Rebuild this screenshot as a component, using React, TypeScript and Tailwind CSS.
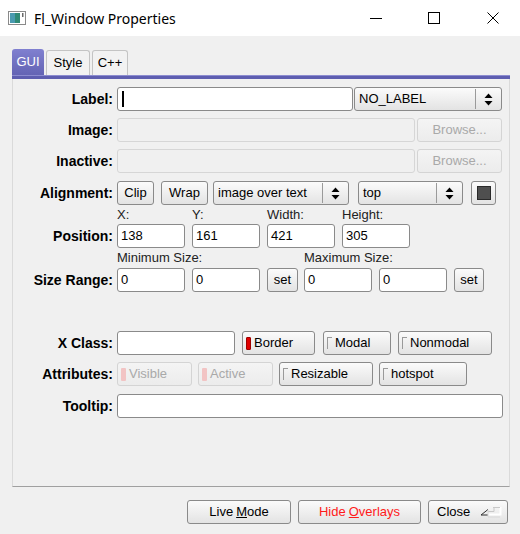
import clsx from 'clsx';
import React from 'react';
import { twMerge } from 'tailwind-merge';

const FONT = "font-['Liberation_Sans',Arial,sans-serif]";

const Btn = ({ className, children, disabled }: { className?: string; children?: React.ReactNode; disabled?: boolean }) => (
  <div
    className={twMerge(
      clsx(
        'flex h-[24px] shrink-0 items-center justify-center rounded-[3px] border bg-linear-to-b text-[13px]',
        disabled
          ? 'border-[#d4d4d4] from-[#f4f4f4] to-[#ececec] text-[#a9a9a9]'
          : 'border-[#8a8a8a] from-[#fbfbfb] to-[#e3e3e3] text-black',
      ),
      className,
    )}>
    {children}
  </div>
);

const Input = ({ className, value, disabled, caret }: { className?: string; value?: string; disabled?: boolean; caret?: boolean }) => (
  <div
    className={clsx(
      'flex h-[24px] shrink-0 items-center rounded-[3px] border px-[3px] text-[13px]',
      disabled ? 'border-[#d6d6d6] bg-[#f0f0f0]' : 'border-[#8a8a8a] bg-white',
      className,
    )}>
    {caret && <div className="ml-[1px] h-[16px] w-[2px] bg-black" />}
    {value}
  </div>
);

const Arrows = () => (
  <svg width="9" height="13" viewBox="0 0 9 13">
    <path d="M4.5 0.5 L8.5 5 L0.5 5 Z" fill="#000" />
    <path d="M0.5 8 L8.5 8 L4.5 12.5 Z" fill="#000" />
  </svg>
);

const Choice = ({ className, label }: { className?: string; label: string }) => (
  <div
    className={clsx(
      'flex h-[24px] shrink-0 items-stretch rounded-[3px] border border-[#8a8a8a] bg-linear-to-b from-[#fbfbfb] to-[#e3e3e3] text-[13px]',
      className,
    )}>
    <div className="flex flex-1 items-center pl-[4px]">{label}</div>
    <div className="my-[1px] w-[1px] bg-[#9a9a9a]" />
    <div className="flex w-[25px] items-center justify-center">
      <Arrows />
    </div>
  </div>
);

const Light = ({ className, label, on, disabled }: { className?: string; label: string; on?: boolean; disabled?: boolean }) => (
  <Btn className={clsx('justify-start pl-[3px]', className)} disabled={disabled}>
    {on || disabled ? (
      <div className={clsx('h-[13px] w-[5px] rounded-[1px]', on ? 'border border-[#a00000] bg-[#e00000]' : 'bg-[#f2c4c4]')} />
    ) : (
      <div className="h-[12px] w-[5px] border-l border-t border-[#9a9a9a]" />
    )}
    <span className="ml-[3px]">{label}</span>
  </Btn>
);

const Row = ({ label, className, children }: { label?: string; className?: string; children?: React.ReactNode }) => (
  <div className={clsx('flex items-center', className)}>
    <div className="w-[100px] shrink-0 text-right text-[14px] font-bold">{label}</div>
    <div className="ml-[4px] flex items-center">{children}</div>
  </div>
);

export default function App() {
  return (
    <div className={clsx('flex h-[534px] w-[520px] flex-col bg-[#f0f0f0] text-black', FONT)}>
      {/* title bar */}
      <div className="flex h-[36px] shrink-0 items-center bg-white">
        <svg className="ml-[8px]" width="18" height="14" viewBox="0 0 18 14">
          <rect x="0.5" y="0.5" width="17" height="13" fill="#fff" stroke="#8a8a8a" />
          <rect x="2" y="2" width="10" height="10" fill="#2f8a76" />
          <rect x="2" y="2" width="5" height="10" fill="#4a9ab0" />
          <rect x="14" y="2" width="1.5" height="4" fill="#6a6a6a" />
        </svg>
        <span className="ml-[8px] font-['Noto_Sans',sans-serif] text-[14px] text-black">Fl_Window Properties</span>
        <div className="ml-auto flex items-center">
          <svg className="mr-[46px]" width="12" height="12" viewBox="0 0 12 12">
            <path d="M0 6.5 H12" stroke="#000" strokeWidth="1" />
          </svg>
          <svg className="mr-[47px]" width="12" height="12" viewBox="0 0 12 12">
            <rect x="0.5" y="0.5" width="11" height="11" fill="none" stroke="#000" />
          </svg>
          <svg className="mr-[21px]" width="12" height="12" viewBox="0 0 12 12">
            <path d="M0.5 0.5 L11.5 11.5 M11.5 0.5 L0.5 11.5" stroke="#000" strokeWidth="1" />
          </svg>
        </div>
      </div>

      {/* tabs */}
      <div className="ml-[12px] mt-[13px] flex h-[26px] items-end text-[13px]">
        <div className="flex h-[26px] w-[32px] items-center justify-center rounded-t-[3px] bg-linear-to-b from-[#8080d0] to-[#6464b4] text-white">
          GUI
        </div>
        <div className="ml-[2px] flex h-[25px] w-[44px] items-center justify-center rounded-t-[3px] border border-b-0 border-[#c4c4c4] bg-[#f2f2f2]">
          Style
        </div>
        <div className="ml-[2px] flex h-[25px] w-[36px] items-center justify-center rounded-t-[3px] border border-b-0 border-[#c4c4c4] bg-[#f2f2f2]">
          C++
        </div>
      </div>
      <div className="ml-[12px] h-[4px] w-[498px] border-t border-[#8c8cd0] bg-[#5e5eb0]" />

      {/* panel */}
      <div className="ml-[12px] h-[408px] w-[498px] border-x border-b border-x-[#dadada] border-b-[#a0a0a0] pt-[8px]">
        <Row label="Label:">
          <Input className="w-[236px]" caret />
          <Choice className="ml-[1px] w-[148px]" label="NO_LABEL" />
        </Row>
        <Row label="Image:" className="mt-[7px]">
          <Input className="w-[298px]" disabled />
          <Btn className="ml-[2px] w-[85px]" disabled>
            Browse...
          </Btn>
        </Row>
        <Row label="Inactive:" className="mt-[7px]">
          <Input className="w-[298px]" disabled />
          <Btn className="ml-[2px] w-[85px]" disabled>
            Browse...
          </Btn>
        </Row>
        <Row label="Alignment:" className="mt-[8px]">
          <Btn className="w-[37px]">Clip</Btn>
          <Btn className="ml-[7px] w-[47px]">Wrap</Btn>
          <Choice className="ml-[5px] w-[136px]" label="image over text" />
          <Choice className="ml-[9px] w-[105px]" label="top" />
          <Btn className="ml-[8px] w-[25px]">
            <div className="h-[14px] w-[14px] border border-[#2a2a2a] bg-[#4f4f4f]" />
          </Btn>
        </Row>

        <div className="ml-[104px] flex h-[19px] items-end text-[13px] text-[#222]">
          <span className="w-[75px]">X:</span>
          <span className="w-[75px]">Y:</span>
          <span className="w-[75px]">Width:</span>
          <span>Height:</span>
        </div>
        <Row label="Position:">
          <Input className="w-[68px]" value="138" />
          <Input className="ml-[7px] w-[68px]" value="161" />
          <Input className="ml-[7px] w-[68px]" value="421" />
          <Input className="ml-[7px] w-[68px]" value="305" />
        </Row>

        <div className="ml-[104px] flex h-[20px] items-end pb-[1px] text-[13px] text-[#222]">
          <span className="w-[187px]">Minimum Size:</span>
          <span>Maximum Size:</span>
        </div>
        <Row label="Size Range:">
          <Input className="w-[68px]" value="0" />
          <Input className="ml-[7px] w-[68px]" value="0" />
          <Btn className="ml-[7px] w-[31px]">set</Btn>
          <Input className="ml-[6px] w-[68px]" value="0" />
          <Input className="ml-[7px] w-[68px]" value="0" />
          <Btn className="ml-[7px] w-[30px]">set</Btn>
        </Row>

        <Row label="X Class:" className="mt-[39px]">
          <Input className="w-[118px]" />
          <Light className="ml-[7px] w-[73px]" label="Border" on />
          <Light className="ml-[8px] w-[68px]" label="Modal" />
          <Light className="ml-[7px] w-[94px]" label="Nonmodal" />
        </Row>
        <Row label="Attributes:" className="mt-[7px]">
          <Light className="w-[75px]" label="Visible" disabled />
          <Light className="ml-[6px] w-[75px]" label="Active" disabled />
          <Light className="ml-[6px] w-[94px]" label="Resizable" />
          <Light className="ml-[6px] w-[88px]" label="hotspot" />
        </Row>
        <Row label="Tooltip:" className="mt-[8px]">
          <Input className="w-[386px]" />
        </Row>
      </div>

      {/* bottom buttons */}
      <div className="ml-[187px] mt-[13px] flex">
        <Btn className="w-[104px]">
          Live <span className="ml-[3px] underline">M</span>ode
        </Btn>
        <Btn className="ml-[7px] w-[123px] text-[#ff1a1a]">
          Hide <span className="ml-[3px] underline">O</span>verlays
        </Btn>
        <Btn className="ml-[7px] w-[80px] justify-start pl-[8px]">
          Close
          <svg className="ml-auto mr-[5px]" width="22" height="12" viewBox="0 0 22 12">
            <path d="M20.5 1 V8.5 H8" fill="none" stroke="#ffffff" strokeWidth="2" />
            <path d="M13 1.5 H20 M14 1.5 V5.5 H8" fill="none" stroke="#c8c8c8" strokeWidth="1" />
            <path d="M1 9 L8 3.5 M1 9 L8 9" fill="none" stroke="#303030" strokeWidth="1" />
            <path d="M8 4 V11 H20" fill="none" stroke="#d8d8d8" strokeWidth="1" />
          </svg>
        </Btn>
      </div>
    </div>
  );
}
